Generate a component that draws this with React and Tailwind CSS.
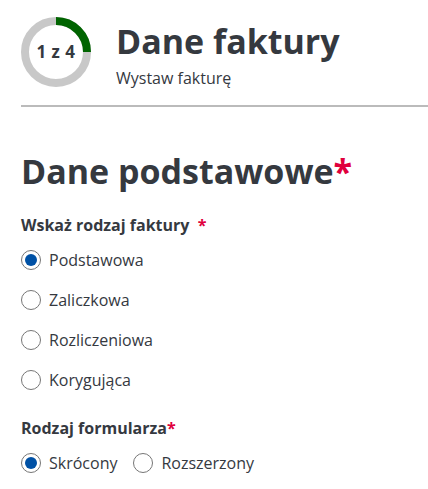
import React from 'react';

// Kółko postępu kroku
const StepCircle = () => (
  <div className="relative w-[70px] h-[70px] shrink-0">
    <svg width="70" height="70" viewBox="0 0 70 70">
      <circle cx="35" cy="35" r="31" fill="none" stroke="#c8c8c8" strokeWidth="8" />
      <path d="M35 4 A31 31 0 0 1 66 35" fill="none" stroke="#006400" strokeWidth="8" />
    </svg>
    <div className="absolute inset-0 flex items-center justify-center text-[17px] font-bold tracking-[0.5px] text-[#35393f]">
      1 z 4
    </div>
  </div>
);

const Radio = ({ label, checked }) => (
  <label className="flex items-center gap-2 h-10">
    <span className="w-5 h-5 rounded-full border border-[#767676] flex items-center justify-center bg-white">
      {checked && <span className="w-3 h-3 rounded-full bg-[#0051a5]" />}
    </span>
    <span className="text-[16px] text-[#35393f]">{label}</span>
  </label>
);

const Star = () => <span className="text-[#e0003c]">*</span>;

export default function App() {
  const rodzaje = [
    { name: 'Podstawowa', checked: true },
    { name: 'Zaliczkowa' },
    { name: 'Rozliczeniowa' },
    { name: 'Korygująca' },
  ];

  return (
    <div className="min-h-screen bg-white pl-[21px] pt-[17px]" style={{ fontFamily: '"Open Sans", sans-serif' }}>
      {/* Nagłówek */}
      <div className="flex items-start gap-[25px]">
        <StepCircle />
        <div className="pt-[2px]">
          <h1 className="text-[34px] leading-[44px] font-bold text-[#35393f]">
            Dane faktury
          </h1>
          <p className="text-[16px] text-[#35393f] mt-[3px]">Wystaw fakturę</p>
        </div>
      </div>
      <div className="h-[2px] bg-[#bbbbbb] mt-[15px]" />

      {/* Dane podstawowe */}
      <h2 className="mt-[40px] text-[34px] leading-[48px] font-bold text-[#35393f]">
        Dane podstawowe<Star />
      </h2>

      <p className="mt-[18px] text-[16px] font-bold text-[#35393f]">
        Wskaż rodzaj faktury&nbsp; <Star />
      </p>
      <div className="flex flex-col mt-[3px]">
        {rodzaje.map((r, i) => (
          <Radio key={i} label={r.name} checked={r.checked} />
        ))}
      </div>

      <p className="mt-[16px] text-[16px] font-bold text-[#35393f]">
        Rodzaj formularza<Star />
      </p>
      <div className="flex gap-4 mt-[3px]">
        <Radio label="Skrócony" checked />
        <Radio label="Rozszerzony" />
      </div>
    </div>
  );
}
